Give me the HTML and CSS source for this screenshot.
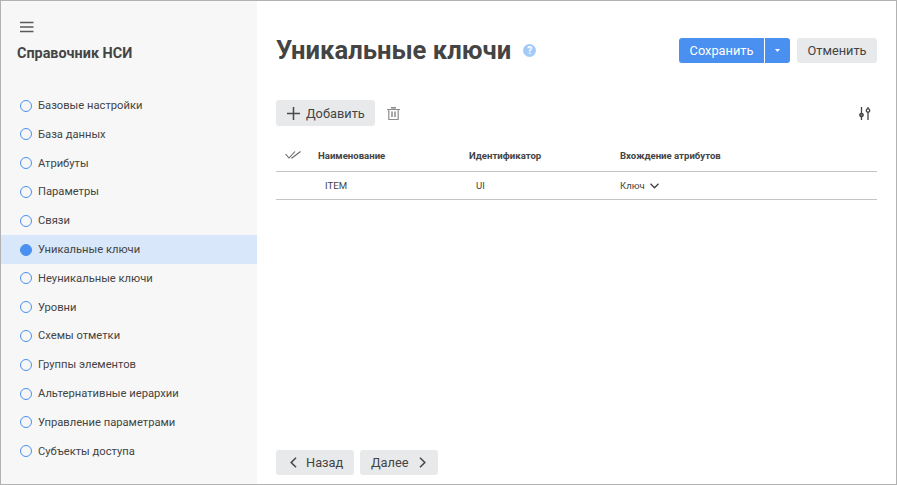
FILE: index.html
```html
<!DOCTYPE html>
<html lang="ru">
<head>
<meta charset="utf-8">
<title>Уникальные ключи</title>
<link rel="stylesheet" href="styles.css">
</head>
<body>
<div class="frame">
  <aside class="sidebar">
    <button class="menu-btn" aria-label="Меню">
      <svg width="14" height="12" viewBox="0 0 14 12"><path d="M0 1.5h13.5M0 6h13.5M0 10.5h13.5" stroke="#5a5a5a" stroke-width="1.3" fill="none"/></svg>
    </button>
    <div class="app-title">Справочник НСИ</div>
    <nav class="steps">
      <div class="step"><span class="dot"></span>Базовые настройки</div>
      <div class="step"><span class="dot"></span>База данных</div>
      <div class="step"><span class="dot"></span>Атрибуты</div>
      <div class="step"><span class="dot"></span>Параметры</div>
      <div class="step"><span class="dot"></span>Связи</div>
      <div class="step active"><span class="dot"></span>Уникальные ключи</div>
      <div class="step"><span class="dot"></span>Неуникальные ключи</div>
      <div class="step"><span class="dot"></span>Уровни</div>
      <div class="step"><span class="dot"></span>Схемы отметки</div>
      <div class="step"><span class="dot"></span>Группы элементов</div>
      <div class="step"><span class="dot"></span>Альтернативные иерархии</div>
      <div class="step"><span class="dot"></span>Управление параметрами</div>
      <div class="step"><span class="dot"></span>Субъекты доступа</div>
    </nav>
  </aside>
  <main class="main">
    <header class="head">
      <h1 class="title">Уникальные ключи</h1>
      <span class="help">?</span>
      <div class="head-actions">
        <div class="split">
          <button class="btn primary save">Сохранить</button>
          <button class="btn primary caret" aria-label="Ещё">
            <svg width="5" height="3" viewBox="0 0 5 3"><path d="M0 0h5L2.5 3z" fill="#fff"/></svg>
          </button>
        </div>
        <button class="btn cancel">Отменить</button>
      </div>
    </header>
    <div class="toolbar">
      <button class="btn add">
        <svg width="13" height="13" viewBox="0 0 13 13"><path d="M6.5 0v13M0 6.5h13" stroke="#4a4a4a" stroke-width="1.5" fill="none"/></svg>
        Добавить
      </button>
      <button class="icon-btn" aria-label="Удалить">
        <svg width="13" height="13" viewBox="0 0 13 13" fill="none" stroke="#8c8c8c" stroke-width="1.2"><path d="M4 0.800h5" stroke-width="1.600"/><path d="M0 2.500h13M1.800 2.500v10h9.400v-10"/><path d="M5 4.500v5.500M8 4.500v5.500" stroke-width="1.500"/></svg>
      </button>
      <button class="icon-btn tune" aria-label="Настройка">
        <svg width="12" height="13" viewBox="0 0 12 13" fill="none" stroke="#444" stroke-width="1.3"><path d="M2.500 0v13M9 0v13"/><circle cx="2.500" cy="8" r="1.700" fill="#777"/><circle cx="9" cy="3.500" r="1.700" fill="#fff"/></svg>
      </button>
    </div>
    <div class="table">
      <div class="row header">
        <div class="cell check">
          <svg width="16" height="8" viewBox="0 0 16 8" fill="none" stroke="#666" stroke-width="1.100"><path d="M0.500 3L4 7 10 0.500M6.500 6.500L7 7 15.500 0.500"/></svg>
        </div>
        <div class="cell name">Наименование</div>
        <div class="cell ident">Идентификатор</div>
        <div class="cell attrs">Вхождение атрибутов</div>
      </div>
      <div class="row">
        <div class="cell check"></div>
        <div class="cell name value">ITEM</div>
        <div class="cell ident value">UI</div>
        <div class="cell attrs">Ключ
          <svg class="chev" width="9" height="6" viewBox="0 0 9 6" fill="none" stroke="#3f3f3f" stroke-width="1.3"><path d="M0.500 0.800L4.500 4.800 8.500 0.800"/></svg>
        </div>
      </div>
    </div>
    <footer class="foot">
      <button class="btn nav back">
        <svg width="7" height="11" viewBox="0 0 7 11" fill="none" stroke="#4a4a4a" stroke-width="1.6"><path d="M6 0.700L1.200 5.500 6 10.300"/></svg>
        Назад
      </button>
      <button class="btn nav next">
        Далее
        <svg width="7" height="11" viewBox="0 0 7 11" fill="none" stroke="#4a4a4a" stroke-width="1.6"><path d="M1 0.700L5.800 5.500 1 10.300"/></svg>
      </button>
    </footer>
  </main>
</div>
</body>
</html>
```
FILE: styles.css
```css
* { box-sizing: border-box; }
html, body { margin: 0; padding: 0; }
body { font-family: Roboto, "Liberation Sans", sans-serif; color: #444; background: #fff; }
button { font-family: inherit; border: 0; background: none; padding: 0; margin: 0; cursor: pointer; }

.frame {
  width: 897px;
  height: 485px;
  border: 1px solid #b2b2b2;
  display: flex;
  overflow: hidden;
}

.sidebar {
  width: 256px;
  flex: none;
  background: #f7f7f7;
  display: flex;
  flex-direction: column;
}
.menu-btn { display: block; width: 14px; height: 12px; margin: 20px 0 0 19px; line-height: 0; }
.app-title { margin: 12px 0 0 16px; font-size: 14.4px; line-height: 17px; font-weight: 700; color: #444; height: 17px; }
.steps { margin-top: 29.2px; display: flex; flex-direction: column; }
.step {
  height: 28.8px;
  display: flex;
  align-items: center;
  padding-left: 19px;
  gap: 6px;
  font-size: 11.2px;
  color: #444;
}
.dot { width: 12px; height: 12px; border-radius: 50%; border: 1.4px solid #4a90f0; flex: none; }
.step.active { background: #d8e7fa; }
.step.active .dot { background: #4a90f0; }

.main { flex: 1; min-width: 0; padding: 0 19px 9px; display: flex; flex-direction: column; }
.head { display: flex; align-items: center; margin-top: 37px; height: 25px; }
.title { margin: 0; font-size: 25.6px; line-height: 25px; font-weight: 700; color: #444; }
.help {
  width: 13px; height: 13px; margin-left: 12px; border-radius: 50%;
  background: #a3cbf8; color: #fff; font-size: 10px; font-weight: 700;
  line-height: 13px; text-align: center; flex: none;
}
.head-actions { margin-left: auto; display: flex; gap: 7px; }
.split { display: flex; gap: 1px; }

.btn {
  height: 25px; padding: 0 10px; border-radius: 3px;
  background: #e8e9ea; color: #444; font-size: 12.8px;
  display: inline-flex; align-items: center;
}
.btn.primary { background: #4a90f0; color: #fff; }
.save { width: 85px; justify-content: center; padding: 0; border-radius: 3px 0 0 3px; }
.caret { width: 25px; padding: 0; justify-content: center; border-radius: 0 3px 3px 0; }
.cancel { width: 80px; justify-content: center; padding: 0; }

.toolbar { display: flex; align-items: center; margin-top: 37px; height: 26px; }
.add { height: 26px; width: 99px; padding: 0 0 0 11px; gap: 6px; }
.icon-btn { display: flex; line-height: 0; margin-left: 12px; }
.tune { margin-left: auto; margin-right: 6px; }

.table { margin-top: 13px; }
.row {
  display: flex; align-items: center; height: 28px;
  border-bottom: 1px solid #c4c4c4; font-size: 9.6px; color: #444;
}
.row.header { height: 33px; font-weight: 700; }
.cell { flex: none; }
.check { width: 42px; padding-left: 9px; line-height: 0; }
.name { width: 151px; }
.ident { width: 151px; }
.value { padding-left: 7px; }
.attrs { display: flex; align-items: center; gap: 5px; }

.foot { margin-top: auto; display: flex; gap: 6px; }
.nav { width: 78px; }
.back { padding-left: 14px; gap: 9px; }
.next { padding-left: 11px; gap: 10px; }
```
